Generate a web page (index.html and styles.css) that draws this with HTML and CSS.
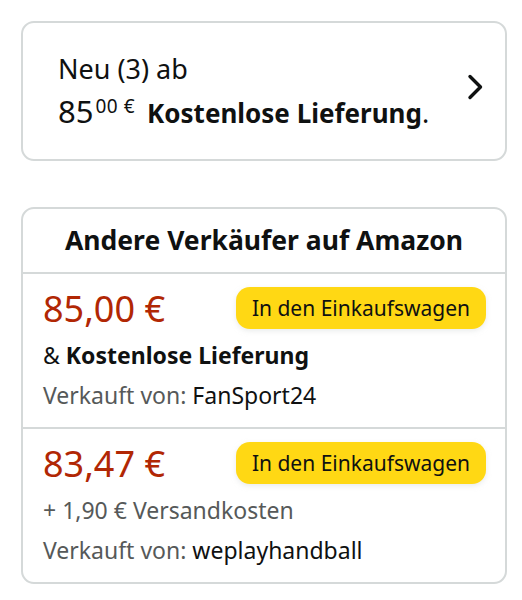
FILE: index.html
```html
<!DOCTYPE html>
<html lang="de">
<head>
    <meta charset="UTF-8">
    <meta name="viewport" content="width=device-width, initial-scale=1.0">
    <title>Angebote</title>
    <link rel="stylesheet" href="styles.css">
</head>
<body>
    <a class="new-offers" href="#">
        <div class="new-text">
            <div>Neu (3) ab</div>
            <div><span class="price-whole">85</span><span class="price-frac">00&nbsp;€</span> <b>Kostenlose Lieferung</b>.</div>
        </div>
        <svg class="chevron" width="18" height="26" viewBox="0 0 18 26">
            <path d="M4 2.5 L14.5 13 L4 23.5" fill="none" stroke="#0f1111" stroke-width="3.4" stroke-linecap="round" stroke-linejoin="round"/>
        </svg>
    </a>

    <div class="sellers">
        <div class="sellers-head">Andere Verkäufer auf Amazon</div>

        <div class="offer">
            <div class="offer-top">
                <span class="offer-price">85,00 €</span>
                <button class="cart-btn">In den Einkaufswagen</button>
            </div>
            <div class="offer-line">&amp; <b>Kostenlose Lieferung</b></div>
            <div class="offer-line"><span class="muted">Verkauft von:</span> FanSport24</div>
        </div>

        <div class="offer">
            <div class="offer-top">
                <span class="offer-price">83,47 €</span>
                <button class="cart-btn">In den Einkaufswagen</button>
            </div>
            <div class="offer-line muted">+ 1,90 € Versandkosten</div>
            <div class="offer-line"><span class="muted">Verkauft von:</span> weplayhandball</div>
        </div>
    </div>
</body>
</html>
```

FILE: styles.css
```css
body {
    margin: 0;
    padding: 21px 15px 16px 21px;
    font-family: "Noto Sans", Arial, sans-serif;
    color: #0f1111;
    background-color: #fff;
}

b {
    font-weight: 700;
}

.new-offers {
    display: flex;
    align-items: center;
    justify-content: space-between;
    height: 136px;
    padding: 0 21px 0 35px;
    border: 2px solid #d5d9d9;
    border-radius: 13px;
    color: #0f1111;
    text-decoration: none;
    font-size: 27px;
    line-height: 42px;
}

.new-text b {
    font-size: 26px;
}

.price-whole {
    font-size: 31px;
}

.price-frac {
    font-size: 19px;
    line-height: 0;
    vertical-align: 10px;
    margin: 0 5px 0 2px;
    letter-spacing: 0.5px;
}

.chevron {
    display: block;
    margin-top: -8px;
}

.sellers {
    margin-top: 46px;
    border: 2px solid #d5d9d9;
    border-radius: 13px;
}

.sellers-head {
    height: 63px;
    line-height: 63px;
    text-align: center;
    font-size: 26.5px;
    font-weight: 700;
    border-bottom: 2px solid #d5d9d9;
}

.offer {
    padding: 13px 19px 12px 20px;
    font-size: 23px;
}

.offer + .offer {
    border-top: 2px solid #d5d9d9;
}

.offer-top {
    display: flex;
    justify-content: space-between;
    align-items: flex-start;
    height: 48px;
}

.offer-price {
    margin-top: 2px;
    font-size: 36px;
    line-height: 40px;
    color: #b12704;
}

.cart-btn {
    height: 42px;
    padding: 0 16px;
    border: none;
    border-radius: 14px;
    background-color: #ffd814;
    box-shadow: 0 2px 5px rgba(213, 217, 217, 0.5);
    font-family: inherit;
    font-size: 21px;
    color: #0f1111;
    cursor: pointer;
}

.offer-line {
    line-height: 40px;
}

.muted {
    color: #565959;
}
```
